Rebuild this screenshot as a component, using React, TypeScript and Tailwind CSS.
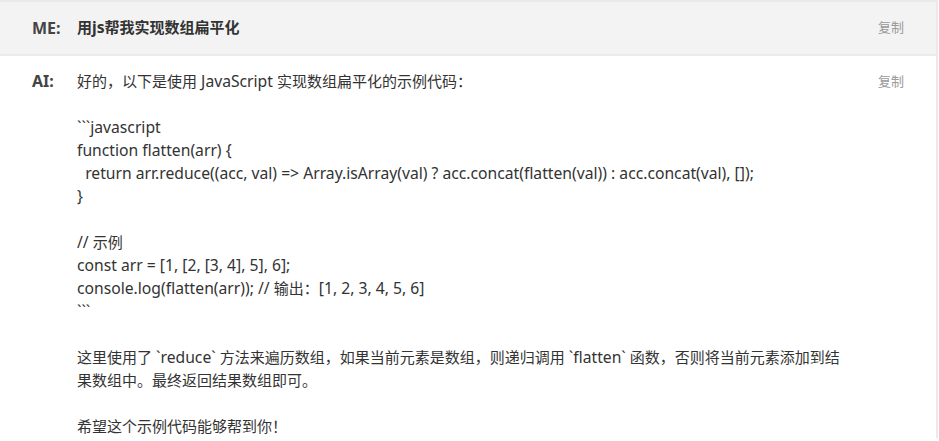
import React from "react";

const font = {
  fontFamily: '"Noto Sans", "Noto Sans CJK SC", sans-serif',
};

const lines: string[] = [
  "好的，以下是使用 JavaScript 实现数组扁平化的示例代码：",
  "",
  "```javascript",
  "function flatten(arr) {",
  "  return arr.reduce((acc, val) => Array.isArray(val) ? acc.concat(flatten(val)) : acc.concat(val), []);",
  "}",
  "",
  "// 示例",
  "const arr = [1, [2, [3, 4], 5], 6];",
  "console.log(flatten(arr)); // 输出：[1, 2, 3, 4, 5, 6]",
  "```",
  "",
  "这里使用了 `reduce` 方法来遍历数组，如果当前元素是数组，则递归调用 `flatten` 函数，否则将当前元素添加到结果数组中。最终返回结果数组即可。",
  "",
  "希望这个示例代码能够帮到你！",
];

const CJK = /[\u3000-\u303f\u4e00-\u9fff\uff00-\uffef]/;

function Mixed({ text }: { text: string }) {
  const parts =
    text.match(
      /[\u3000-\u303f\u4e00-\u9fff\uff00-\uffef]+|[^\u3000-\u303f\u4e00-\u9fff\uff00-\uffef]+/g
    ) || [];
  return (
    <>
      {parts.map((p, i) =>
        CJK.test(p) ? (
          <span key={i}>{p}</span>
        ) : (
          <span key={i} className="text-[15.7px]">
            {p}
          </span>
        )
      )}
    </>
  );
}

export default function App() {
  return (
    <div
      className="w-[939px] h-[441px] overflow-hidden bg-white text-[#333]"
      style={font}
    >
      <div className="w-[938px] border-t-2 border-r-2 border-[#eaeaea]">
        <div className="flex items-center h-[54px] bg-[#f3f3f3] border-b-2 border-[#ebebeb] pl-[32px] pr-[32px]">
          <div className="w-[45px] text-[16px] font-bold text-[#444]">ME:</div>
          <div className="flex-1 text-[15px] font-bold text-[#333]">
            <Mixed text="用js帮我实现数组扁平化" />
          </div>
          <div className="text-[13px] text-[#9a9a9a]">复制</div>
        </div>
        <div className="flex pl-[32px] pr-[32px] pt-[14px]">
          <div className="w-[45px] text-[16px] leading-[23px] font-bold text-[#444]">
            AI:
          </div>
          <div className="flex-1 pr-[24px] text-[15px] leading-[23px] whitespace-pre-wrap">
            {lines.map((l, i) => (
              <div key={i}>{l === "" ? "\u00a0" : <Mixed text={l} />}</div>
            ))}
          </div>
          <div className="text-[13px] leading-[23px] text-[#9a9a9a]">复制</div>
        </div>
      </div>
    </div>
  );
}
